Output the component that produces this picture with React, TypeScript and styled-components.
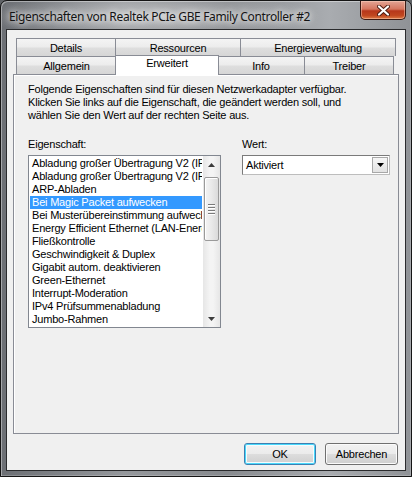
import React from 'react'
import styled, { createGlobalStyle, css } from 'styled-components';

const GlobalStyle = createGlobalStyle`
  html, body {
    margin: 0;
    padding: 0;
    background: #5f6266;
  }
  body {
    font-family: "Liberation Sans", Arial, sans-serif;
    font-size: 11px;
    letter-spacing: -0.2px;
    color: #000;
  }
`

const Window = styled.div`
  width: 412px;
  height: 477px;
  box-sizing: border-box;
  display: flex;
  flex-direction: column;
  border: 1px solid #151515;
  border-radius: 7px 7px 0 0;
  padding: 0 5px 5px 5px;
  background:
    radial-gradient(ellipse 170px 22px at 150px 15px, rgba(235,235,235,0.5), rgba(235,235,235,0) 100%),
    linear-gradient(to right, #6c6f74 0%, #95989c 30%, #878a8e 55%, #a9acb0 80%, #8f9296 100%);
  box-shadow: inset 1px 1px 0 rgba(255,255,255,0.4), inset -1px -1px 0 rgba(255,255,255,0.2);
`

const TitleBar = styled.div`
  height: 28px;
  display: flex;
  align-items: flex-start;
  flex-shrink: 0;
`

const Title = styled.div`
  padding: 7px 0 0 3px;
  font-family: "Noto Sans", "Liberation Sans", sans-serif;
  font-size: 12px;
  letter-spacing: -0.35px;
  color: #141414;
  text-shadow: 0 0 6px #fff, 0 0 10px rgba(255,255,255,0.8);
`

const CloseButton = styled.div`
  margin-left: auto;
  width: 46px;
  height: 19px;
  box-sizing: border-box;
  border: 1px solid #3b1a14;
  border-top: none;
  border-radius: 0 0 5px 5px;
  background: linear-gradient(to bottom, #e3a495 0%, #d5765f 45%, #b7371b 55%, #c0461f 80%, #dd7a45 100%);
  box-shadow: inset 0 0 0 1px rgba(255,220,200,0.45);
  display: flex;
  align-items: center;
  justify-content: center;
`

const Client = styled.div`
  flex: 1;
  display: flex;
  flex-direction: column;
  background: #f0f0f0;
  border: 1px solid #2a2b2d;
  padding: 8px 6px 0 6px;
`

const TabStrip = styled.div`
  display: flex;
  flex-direction: column;
  padding: 0 3px;
`

const TabRow = styled.div`
  display: flex;
  height: 18px;
  align-items: flex-end;
`

const Tab = styled.div<{ $w: number; $active?: boolean }>`
  width: ${p => p.$w}px;
  height: 18px;
  box-sizing: border-box;
  margin-left: -1px;
  border: 1px solid #898c95;
  border-bottom: none;
  background: linear-gradient(to bottom, #f4f4f4 0%, #ececec 48%, #dedede 52%, #d6d6d6 100%);
  display: flex;
  align-items: center;
  justify-content: center;
  &:first-child { margin-left: 0; }
  ${p => p.$active && css`
    height: 20px;
    margin: 0 -1px -1px -2px;
    background: #fff;
    position: relative;
    z-index: 1;
    padding-bottom: 5px;
  `}
`

const Panel = styled.div`
  height: 360px;
  box-sizing: border-box;
  border: 1px solid #898c95;
  background: #f0f0f0;
  box-shadow: inset 1px 1px 0 #fff;
  padding: 8px 14px 0 14px;
`

const Intro = styled.p`
  margin: 0;
  line-height: 13px;
`

const Columns = styled.div`
  display: grid;
  grid-template-columns: 193px 148px;
  column-gap: 21px;
  margin-top: 16px;
`

const Label = styled.div`
  line-height: 13px;
  margin-bottom: 4px;
`

const ListBox = styled.div`
  height: 173px;
  box-sizing: border-box;
  border: 1px solid #828790;
  background: #fff;
  display: flex;
`

const Items = styled.div`
  flex: 1;
  min-width: 0;
  overflow: hidden;
  padding-top: 1px;
`

const Item = styled.div<{ $selected?: boolean }>`
  height: 13px;
  line-height: 13px;
  margin: 0 1px;
  padding-left: 2px;
  white-space: nowrap;
  overflow: hidden;
  ${p => p.$selected && css`
    background: #3399ff;
    color: #fff;
  `}
`

const ScrollBar = styled.div`
  width: 17px;
  flex-shrink: 0;
  display: flex;
  flex-direction: column;
  background: linear-gradient(to right, #e6e6e6, #f4f4f4 40%, #f4f4f4 60%, #e6e6e6);
`

const ArrowBtn = styled.div`
  height: 17px;
  display: flex;
  align-items: center;
  justify-content: center;
`

const Track = styled.div`
  flex: 1;
  display: flex;
  flex-direction: column;
  padding-top: 4px;
`

const Thumb = styled.div`
  height: 64px;
  margin: 0 1px;
  box-sizing: border-box;
  border: 1px solid #9a9a9a;
  border-radius: 2px;
  background: linear-gradient(to right, #f4f4f4, #e9e9e9 50%, #dadada);
  box-shadow: inset 1px 1px 0 #fff;
  display: flex;
  flex-direction: column;
  align-items: center;
  justify-content: center;
  gap: 2px;
`

const Grip = styled.div`
  width: 7px;
  height: 1px;
  background: #7a7a7a;
  box-shadow: 0 1px 0 #fff;
`

const Combo = styled.div`
  height: 20px;
  box-sizing: border-box;
  border: 1px solid #7a7a7a;
  border-right-color: #bdbdbd;
  border-bottom-color: #bdbdbd;
  background: #fff;
  display: flex;
  align-items: center;
  padding: 1px;
`

const ComboText = styled.div`
  flex: 1;
  padding-left: 2px;
`

const ComboButton = styled.div`
  width: 16px;
  height: 16px;
  box-sizing: border-box;
  border: 1px solid #a8a8a8;
  background: linear-gradient(to bottom, #f6f6f6, #e2e2e2);
  display: flex;
  align-items: center;
  justify-content: center;
`

const ButtonRow = styled.div`
  display: flex;
  justify-content: flex-end;
  gap: 9px;
  padding: 9px 1px 0 0;
`

const Button = styled.div<{ $default?: boolean; $w: number }>`
  width: ${p => p.$w}px;
  height: 22px;
  box-sizing: border-box;
  border: 1px solid #707070;
  border-radius: 3px;
  background: linear-gradient(to bottom, #f2f2f2 0%, #ebebeb 50%, #dddddd 51%, #cfcfcf 100%);
  box-shadow: inset 0 0 0 1px #fbfbfb;
  display: flex;
  align-items: center;
  justify-content: center;
  ${p => p.$default && css`
    border-color: #3c7fb1;
    box-shadow: inset 0 0 0 1px #48d8fb, inset 0 0 0 2px #f4fbfe;
  `}
`

const Triangle = ({ dir, color = '#000' }: { dir: 'up' | 'down'; color?: string }) => (
  <svg width="7" height="4" viewBox="0 0 7 4">
    <path d={dir === 'up' ? 'M0 4 L3.5 0 L7 4 Z' : 'M0 0 L7 0 L3.5 4 Z'} fill={color} />
  </svg>
)

const items = [
  'Abladung großer Übertragung V2 (IPv4)',
  'Abladung großer Übertragung V2 (IPv6)',
  'ARP-Abladen',
  'Bei Magic Packet aufwecken',
  'Bei Musterübereinstimmung aufwecken',
  'Energy Efficient Ethernet (LAN-Energiesparmodus)',
  'Fließkontrolle',
  'Geschwindigkeit & Duplex',
  'Gigabit autom. deaktivieren',
  'Green-Ethernet',
  'Interrupt-Moderation',
  'IPv4 Prüfsummenabladung',
  'Jumbo-Rahmen',
]

const App = () => {
  return (
    <>
      <GlobalStyle />
      <Window>
        <TitleBar>
          <Title>Eigenschaften von Realtek PCIe GBE Family Controller #2</Title>
          <CloseButton>
            <svg width="13" height="11" viewBox="0 0 13 11">
              <path d="M2 1.5 L11 9.5 M11 1.5 L2 9.5" stroke="#4a1a10" strokeWidth="4" strokeLinecap="round" />
              <path d="M2 1.5 L11 9.5 M11 1.5 L2 9.5" stroke="#fff" strokeWidth="2.2" strokeLinecap="round" />
            </svg>
          </CloseButton>
        </TitleBar>
        <Client>
          <TabStrip>
            <TabRow>
              <Tab $w={100}>Details</Tab>
              <Tab $w={126}>Ressourcen</Tab>
              <Tab $w={156}>Energieverwaltung</Tab>
            </TabRow>
            <TabRow>
              <Tab $w={101}>Allgemein</Tab>
              <Tab $w={104} $active>Erweitert</Tab>
              <Tab $w={88}>Info</Tab>
              <Tab $w={90}>Treiber</Tab>
            </TabRow>
          </TabStrip>
          <Panel>
            <Intro>
              Folgende Eigenschaften sind für diesen Netzwerkadapter verfügbar.<br />
              Klicken Sie links auf die Eigenschaft, die geändert werden soll, und<br />
              wählen Sie den Wert auf der rechten Seite aus.
            </Intro>
            <Columns>
              <div>
                <Label>Eigenschaft:</Label>
                <ListBox>
                  <Items>
                    {items.map((it, i) => (
                      <Item key={it} $selected={i === 3}>{it}</Item>
                    ))}
                  </Items>
                  <ScrollBar>
                    <ArrowBtn><Triangle dir="up" color="#3c3c3c" /></ArrowBtn>
                    <Track>
                      <Thumb>
                        <Grip /><Grip /><Grip /><Grip />
                      </Thumb>
                    </Track>
                    <ArrowBtn><Triangle dir="down" color="#3c3c3c" /></ArrowBtn>
                  </ScrollBar>
                </ListBox>
              </div>
              <div>
                <Label>Wert:</Label>
                <Combo>
                  <ComboText>Aktiviert</ComboText>
                  <ComboButton><Triangle dir="down" /></ComboButton>
                </Combo>
              </div>
            </Columns>
          </Panel>
          <ButtonRow>
            <Button $w={72} $default>OK</Button>
            <Button $w={73}>Abbrechen</Button>
          </ButtonRow>
        </Client>
      </Window>
    </>
  )
}

export default App;
